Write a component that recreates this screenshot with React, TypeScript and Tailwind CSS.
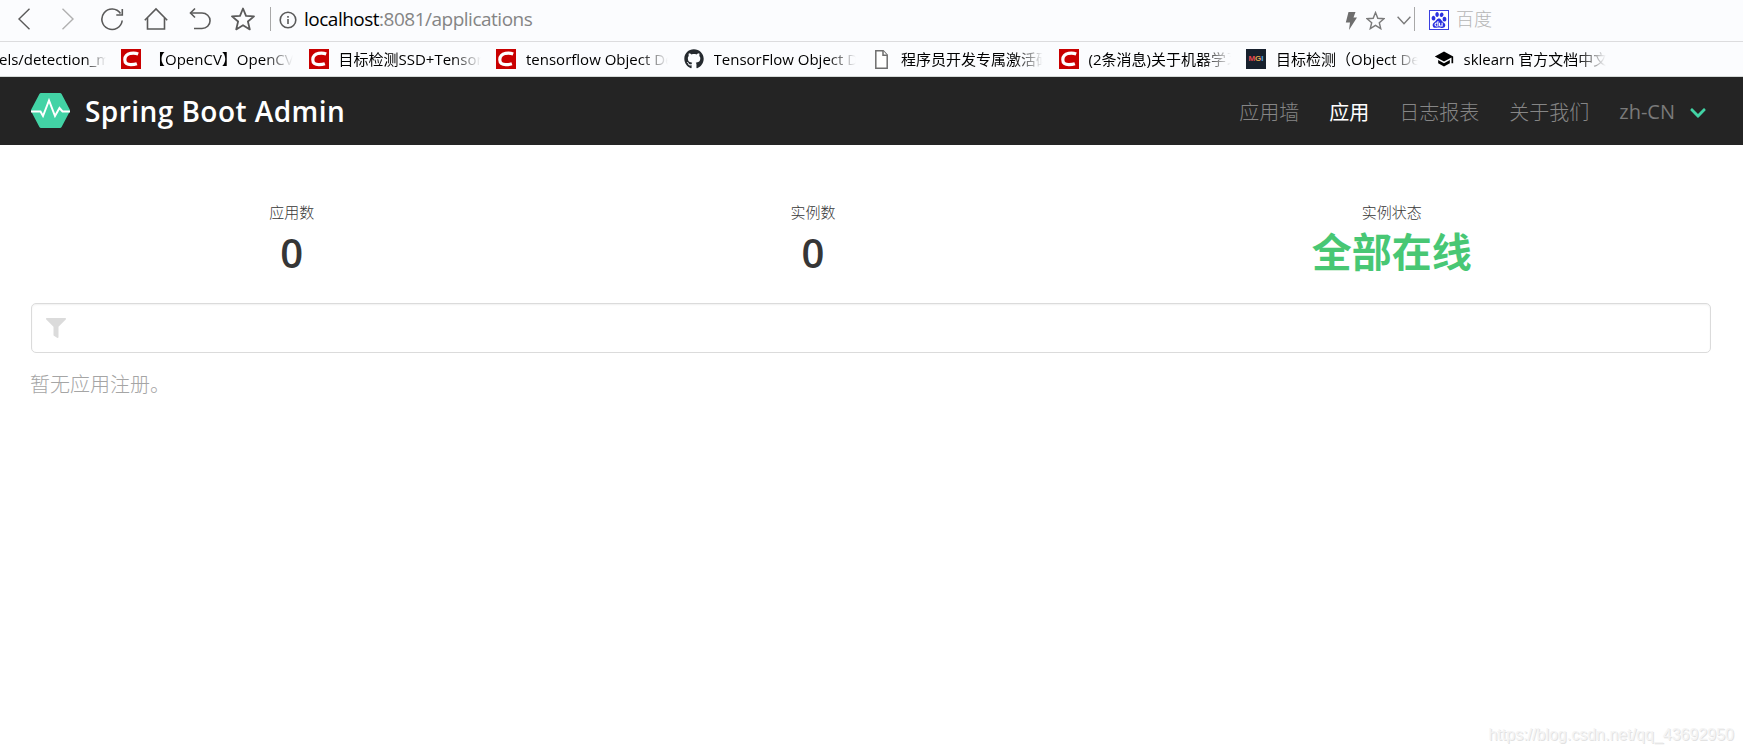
import type { ReactNode } from "react";
import { FaChevronDown, FaFilter, FaGithub } from "react-icons/fa";
import { MdSchool } from "react-icons/md";
import { SiBaidu } from "react-icons/si";

function CsdnIcon() {
  return (
    <svg viewBox="0 0 20 20" className="h-5 w-5">
      <rect width="20" height="20" fill="#c90000" />
      <path
        d="M17.2 4.900C14.800 4 12 3.900 9.600 4.300 6.100 5 3.900 7.300 3.800 10.600c-.1 3.700 2.400 5.200 6.200 5.100 2 0 3.900-.2 5.900-.9"
        fill="none"
        stroke="#fff"
        strokeWidth="3.2"
      />
    </svg>
  );
}

function FileIcon() {
  return (
    <svg viewBox="0 0 13 19" className="h-[19px] w-[13px]" fill="#fff" stroke="#6e6e6e" strokeWidth="1.5">
      <path d="M.8.8h7.400l4 4.200v13.200H.8z" />
      <path d="M8 .8V5.200h4.200" />
    </svg>
  );
}

function MgiIcon() {
  return (
    <div className="flex h-5 w-5 items-center justify-center bg-[#17202d] font-['Liberation_Sans'] text-[8px] leading-none font-bold">
      <span className="text-[#e5484d]">M</span>
      <span className="text-[#e0a84e]">G</span>
      <span className="text-[#4aa8e0]">I</span>
    </div>
  );
}

const bookmarks: { icon: ReactNode; title: string; className: string }[] = [
  { icon: <CsdnIcon />, title: "【OpenCV】OpenCV", className: "-ml-[1px]" },
  { icon: <CsdnIcon />, title: "目标检测SSD+Tensor", className: "" },
  { icon: <CsdnIcon />, title: "tensorflow Object De", className: "" },
  { icon: <FaGithub className="h-5 w-5 text-[#24292e]" />, title: "TensorFlow Object De", className: "" },
  { icon: <FileIcon />, title: "程序员开发专属激活码", className: "" },
  { icon: <CsdnIcon />, title: "(2条消息)关于机器学习", className: "" },
  { icon: <MgiIcon />, title: "目标检测（Object Det", className: "" },
  { icon: <MdSchool className="h-5 w-5 text-black" />, title: "sklearn 官方文档中文", className: "" },
];

const navItems = [
  { label: "应用墙", active: false },
  { label: "应用", active: true },
  { label: "日志报表", active: false },
  { label: "关于我们", active: false },
];

function Toolbar() {
  return (
    <div className="flex h-[42px] items-center border-b border-[#dcdcde] bg-[#fbfcfe] pb-[3px]">
      <div className="flex items-center pl-[17px] text-[#5a5a5a]">
        <svg viewBox="0 0 14 22" className="h-[22px] w-[14px]" fill="none" stroke="currentColor" strokeWidth="1.4">
          <path d="M12.500.800 2 11l10.500 10.200" />
        </svg>
        <svg viewBox="0 0 14 22" className="ml-[30px] h-[22px] w-[14px]" fill="none" stroke="#b0b0b0" strokeWidth="1.4">
          <path d="M1.500.800 12 11 1.500 21.200" />
        </svg>
        <svg viewBox="0 0 24 24" className="ml-[25px] h-6 w-6" fill="none" stroke="currentColor" strokeWidth="1.6">
          <path d="M22.200 13.500A10.200 10.200 0 1 1 20.500 6.500" />
          <path d="M22.300 2v6h-6" />
        </svg>
        <svg viewBox="0 0 24 24" className="ml-5 h-6 w-6" fill="none" stroke="currentColor" strokeWidth="1.6">
          <path d="M.8 13.200 12 2l11.200 11.200" />
          <path d="M3.500 11v11h17V11" />
        </svg>
        <svg viewBox="0 0 22 24" className="ml-[21px] h-6 w-[22px]" fill="none" stroke="currentColor" strokeWidth="1.6">
          <path d="M6 1.500 1.500 6 6 10.500" />
          <path d="M1.500 6H13a8 7.700 0 0 1 0 15.500H5" />
        </svg>
        <svg viewBox="0 0 24 24" className="ml-5 h-6 w-6" fill="none" stroke="currentColor" strokeWidth="1.8" strokeLinejoin="round">
          <path d="m12 1.500 3 7.300 8 .6-6.100 5.100 1.900 7.900L12 18.200l-6.800 4.200 1.900-7.900L1 9.400l8-.6z" />
        </svg>
      </div>
      <div className="ml-[15px] h-6 w-px bg-[#a8a8a8]" />
      <svg viewBox="0 0 18 18" className="ml-[8px] mt-[2px] h-[18px] w-[18px]" fill="none" stroke="#5a5a5a" strokeWidth="1.6">
        <circle cx="9" cy="9" r="7.800" />
        <path d="M9 8v5M9 5v1.800" />
      </svg>
      <div className="ml-[7px] flex-1 text-[19px] leading-6 tracking-[-0.5px] text-[#858585]">
        <span className="text-black">localhost</span>:8081/applications
      </div>
      <div className="flex items-center pr-[251px]">
        <svg viewBox="0 0 12 18" className="mt-[3px] h-[18px] w-3" fill="#6e6e6e">
          <path d="M3.500 0h7L8.500 5.500H12L4 18l1-7.500H.8z" />
        </svg>
        <svg viewBox="0 0 24 24" className="ml-[9px] mt-[2px] h-[19px] w-[19px]" fill="none" stroke="#7a7a7a" strokeWidth="1.8">
          <path d="m12 2 2.900 7.100 7.800.6-5.900 5 1.800 7.600L12 18.200l-6.600 4.100 1.800-7.600-5.900-5 7.800-.6z" />
        </svg>
        <svg viewBox="0 0 14 9" className="ml-[12px] mt-[2px] h-[9px] w-[14px]" fill="none" stroke="#7a7a7a" strokeWidth="1.4">
          <path d="m.6.800 6.400 7 6.400-7" />
        </svg>
        <div className="ml-[3px] h-6 w-px bg-[#a8a8a8]" />
        <div className="ml-[14px] mt-[1px] flex h-5 w-5 items-center justify-center border border-[#3a3fe0] bg-white">
          <SiBaidu className="h-4 w-4 text-[#2a30e0]" />
        </div>
        <span className="ml-[7px] text-[18px] leading-6 font-light text-[#b5b5b5]">百度</span>
      </div>
    </div>
  );
}

function Bookmarks() {
  return (
    <div className="flex h-[35px] items-center overflow-hidden border-b border-[#d5dad8] bg-[#fbfcfe] text-[15px] leading-5 whitespace-nowrap text-black">
      <div className="w-[121px] shrink-0">
        <div className="w-[106px] overflow-hidden mask-r-from-80% mask-r-to-100%">
          <span className="-ml-px">els/detection_m</span>
        </div>
      </div>
      {bookmarks.map((b, i) => (
        <div key={i} className="flex w-[187.5px] shrink-0 items-center">
          <div className="flex w-5 justify-center">{b.icon}</div>
          <div className="ml-[10px] w-[142px] overflow-hidden mask-r-from-80% mask-r-to-100%">
            <span className={b.className}>{b.title}</span>
          </div>
        </div>
      ))}
    </div>
  );
}

function Navbar() {
  return (
    <nav className="flex h-[68px] items-center bg-[#242424] pr-[36px] pl-[31px]">
      <svg viewBox="0 0 39 35" className="mb-[2px] h-[35px] w-[39px]">
        <path d="M10 0h19a2 2 0 0 1 1.600 1L38.500 16a3 3 0 0 1 0 3l-7.900 15a2 2 0 0 1-1.600 1H10a2 2 0 0 1-1.600-1L.5 19a3 3 0 0 1 0-3L8.400 1A2 2 0 0 1 10 0z" fill="#42d3a5" />
        <path d="M0 18.500h9.500l2.500 4.500 6-15.500 6 15.500 4.500-8 3 3.500H39" fill="none" stroke="#fff" strokeWidth="2" />
      </svg>
      <h1 className="ml-[15px] flex-1 text-[28px] leading-10 font-semibold tracking-[0.45px] text-white">Spring Boot Admin</h1>
      <div className="flex items-center pt-[3px] text-[20px] leading-7 text-[#7a7a7a]">
        {navItems.map((item) => (
          <a key={item.label} className={item.active ? "mr-[30px] text-white" : "mr-[30px] font-light text-[#868686]"}>
            {item.label}
          </a>
        ))}
        <a className="mr-[14px] -mt-[1px]">zh-CN</a>
        <FaChevronDown className="h-[18px] w-[18px] text-[#42d3a5]" />
      </div>
    </nav>
  );
}

function Stat({ label, children }: { label: string; children: ReactNode }) {
  return (
    <div className="text-center">
      <p className="text-[15px] leading-[22px] font-light text-[#363636]">{label}</p>
      {children}
    </div>
  );
}

export default function App() {
  return (
    <div className="flex h-[753px] flex-col bg-white font-['Open_Sans','Noto_Sans_CJK_SC',sans-serif]">
      <Toolbar />
      <Bookmarks />
      <Navbar />
      <main className="flex-1 pt-[56px] pr-[32px] pl-[31px]">
        <div className="mb-px flex h-[101px] justify-around pr-px">
          <Stat label="应用数">
            <p className="mt-[7px] text-[40px] leading-[45px] font-semibold text-[#363636]">0</p>
          </Stat>
          <Stat label="实例数">
            <p className="mt-[7px] text-[40px] leading-[45px] font-semibold text-[#363636]">0</p>
          </Stat>
          <Stat label="实例状态">
            <p className="mt-[6px] text-[40px] leading-[45px] font-bold text-[#48c774]">全部在线</p>
          </Stat>
        </div>
        <div className="flex h-[50px] items-center rounded-[5px] border border-[#dbdbdb] px-[14px] shadow-[inset_0_1px_2px_rgba(10,10,10,0.06)]">
          <FaFilter className="h-5 w-5 text-[#dbdbdb]" />
        </div>
        <p className="mt-[17px] -ml-px text-[20px] leading-[30px] font-light text-[#a5a5a5]">暂无应用注册。</p>
      </main>
      <footer className="pr-[9px] pb-[6px] text-right font-['Liberation_Sans',sans-serif] text-[16px] leading-6 text-[#f4f4f4] text-shadow-[1px_1px_0_#e2e2e2]">
        https://blog.csdn.net/qq_43692950
      </footer>
    </div>
  );
}
